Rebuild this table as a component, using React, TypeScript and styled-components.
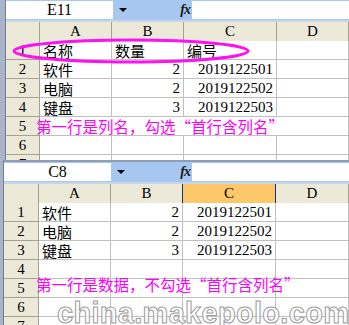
import React from 'react';
import styled, { createGlobalStyle } from 'styled-components';

const GlobalStyle = createGlobalStyle`
  html, body {
    margin: 0;
    padding: 0;
  }
  body {
    width: 349px;
    height: 325px;
    overflow: hidden;
    background: #a9b4c8;
    font-family: "Liberation Serif", "Noto Sans CJK SC", serif;
  }
`;

const Page = styled.div`
  display: flex;
  flex-direction: column;
  width: 349px;
  height: 325px;
  overflow: hidden;
`;

const Window = styled.div<{ $left: number; $height: number; $top: number }>`
  position: relative;
  margin-left: ${({ $left }) => $left}px;
  height: ${({ $height }) => $height}px;
  border-left: 1px solid #6f7d96;
  border-top: ${({ $top }) => $top}px solid #8e9cb5;
  background: white;
  overflow: hidden;
`;

const Toolbar = styled.div`
  display: flex;
  height: 20px;
  background: #a6c8f0;
  border-bottom: 2px solid #c9d6ea;
`;

const NameBox = styled.div`
  width: 107px;
  margin: 1px 0;
  background: white;
  text-align: center;
  font-size: 16px;
  line-height: 18px;
  color: #000;
`;

const DropArea = styled.div<{ $width: number }>`
  display: flex;
  align-items: center;
  justify-content: space-between;
  width: ${({ $width }) => $width}px;
  padding: 0 2px 0 6px;
  box-sizing: border-box;
`;

const Arrow = styled.span`
  width: 0;
  height: 0;
  border-left: 4px solid transparent;
  border-right: 4px solid transparent;
  border-top: 4px solid #000;
`;

const Fx = styled.span`
  font-style: italic;
  font-weight: bold;
  font-size: 14px;
  color: #1a1a1a;
  letter-spacing: -1px;
`;

const Formula = styled.div`
  flex: 1;
  margin: 1px 0;
  background: white;
`;

const Grid = styled.div<{ $cols: string }>`
  display: grid;
  grid-template-columns: ${({ $cols }) => $cols};
  grid-auto-rows: 19px;
`;

type Kind = 'head' | 'rowhead' | 'cell' | 'sel';

const lineColor = (kind: Kind) =>
  kind === 'cell' ? '#c0c0c0' : kind === 'sel' ? '#1d2f82' : '#a5a291';

const Cell = styled.div<{ $kind: Kind; $align?: string; $span?: number; $tall?: boolean }>`
  box-sizing: border-box;
  grid-column: span ${({ $span }) => $span || 1};
  height: ${({ $tall }) => ($tall ? 20 : 19)}px;
  padding: 0 3px;
  white-space: nowrap;
  font-size: 15px;
  line-height: 19px;
  color: #000;
  text-align: ${({ $align, $kind }) =>
    $align || ($kind === 'cell' ? 'left' : 'center')};
  background: ${({ $kind }) =>
    $kind === 'sel' ? '#fcc86a' : $kind === 'cell' ? '#fff' : '#ece9d8'};
  border-right: 1px solid ${({ $kind }) => lineColor($kind)};
  border-bottom: 1px solid ${({ $kind }) => lineColor($kind)};
  ${({ $kind }) => ($kind === 'sel' ? 'border-left: 1px solid #1d2f82; margin-left: -1px;' : '')}
`;

const CjkText = styled.span`
  font-family: "Noto Sans CJK SC", sans-serif;
  font-size: 15px;
`;

const Note = styled.span`
  font-family: "Noto Sans CJK SC", sans-serif;
  font-size: 15.5px;
  color: #ff00ff;
`;

const FloatNote = styled.div<{ $x: number; $y: number }>`
  position: absolute;
  left: ${({ $x }) => $x}px;
  top: ${({ $y }) => $y}px;
  line-height: 19px;
  white-space: nowrap;
`;

const Ring = styled.svg`
  position: absolute;
  left: -5px;
  top: 0;
  pointer-events: none;
`;

const Watermark = styled.div`
  position: absolute;
  left: 53px;
  top: 137px;
  font-family: "Liberation Sans", Arial, sans-serif;
  font-weight: bold;
  font-size: 29px;
  line-height: 29px;
  letter-spacing: 0.3px;
  color: rgba(255, 255, 255, 0.85);
  -webkit-text-stroke: 1px #9c9c9c;
  white-space: nowrap;
`;

type Row = [string, string, string] | null;

const isNum = (v: string) => /^\d+$/.test(v);

const renderRows = (rows: Row[], blankRow?: number) =>
  rows.map((row, i) => {
    const n = i + 1;
    if (blankRow === n) {
      return (
        <React.Fragment key={n}>
          <Cell $kind="rowhead">{n}</Cell>
          <Cell $kind="cell" $span={4} />
        </React.Fragment>
      );
    }
    return (
      <React.Fragment key={n}>
        <Cell $kind="rowhead">{n}</Cell>
        <Cell $kind="cell">{row && <CjkText>{row[0]}</CjkText>}</Cell>
        {[row?.[1], row?.[2]].map((v, j) => (
          <Cell key={j} $kind="cell" $align={v && isNum(v) ? 'right' : 'left'}>
            {v && (isNum(v) ? v : <CjkText>{v}</CjkText>)}
          </Cell>
        ))}
        <Cell $kind="cell" />
      </React.Fragment>
    );
  });

const data: Row[] = [
  ['软件', '2', '2019122501'],
  ['电脑', '2', '2019122502'],
  ['键盘', '3', '2019122503'],
];

const topRows: Row[] = [['名称', '数量', '编号'], ...data, null, null, null];
const bottomRows: Row[] = [...data, null, null, null, null];

const Sheet = ({
  name,
  left,
  top,
  height,
  cols,
  selected,
  rows,
  blankRow,
  children,
}: {
  name: string;
  left: number;
  top: number;
  height: number;
  cols: string;
  selected?: string;
  rows: Row[];
  blankRow?: number;
  children?: React.ReactNode;
}) => (
  <Window $left={left} $height={height} $top={top}>
    <Toolbar>
      <NameBox>{name}</NameBox>
      <DropArea $width={84 - left}>
        <Arrow />
        <Fx>fx</Fx>
      </DropArea>
      <Formula />
    </Toolbar>
    <Grid $cols={cols}>
      <Cell $kind="head" $tall />
      {['A', 'B', 'C', 'D'].map(c => (
        <Cell key={c} $kind={selected === c ? 'sel' : 'head'} $tall>
          {c}
        </Cell>
      ))}
      {renderRows(rows, blankRow)}
    </Grid>
    {children}
  </Window>
);

export default function App() {
  return (
    <Page>
      <GlobalStyle />
      <Sheet
        name="E11"
        left={5}
        top={0}
        height={160}
        cols="34px 72px 72px 93px 1fr"
        rows={topRows}
        blankRow={5}
      >
        <Ring width="260" height="70">
          <ellipse
            cx="130"
            cy="51"
            rx="117"
            ry="11"
            fill="none"
            stroke="#ff10f0"
            strokeWidth="3"
          />
        </Ring>
        <FloatNote $x={30} $y={117}>
          <Note>第一行是列名，勾选“首行含列名”</Note>
        </FloatNote>
      </Sheet>
      <Sheet
        name="C8"
        left={3}
        top={2}
        height={163}
        cols="35px 72px 72px 93px 1fr"
        selected="C"
        rows={bottomRows}
      >
        <FloatNote $x={32} $y={113}>
          <Note>第一行是数据，不勾选“首行含列名”</Note>
        </FloatNote>
        <Watermark>china.makepolo.com</Watermark>
      </Sheet>
    </Page>
  );
}
